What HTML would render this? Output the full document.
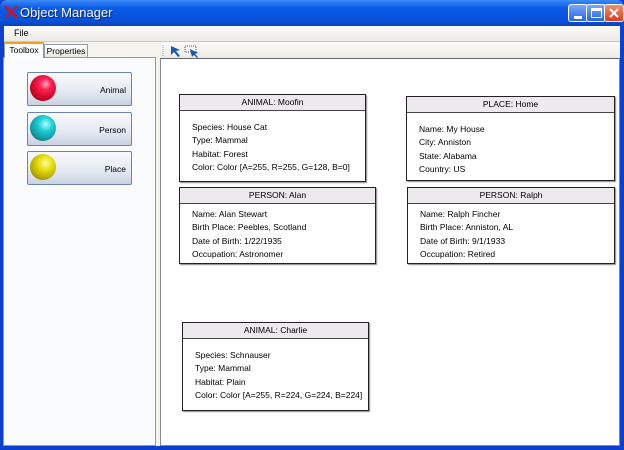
<!DOCTYPE html>
<html><head><style>
*{margin:0;padding:0;box-sizing:border-box}
body{width:624px;height:450px;overflow:hidden;font-family:"Liberation Sans",sans-serif;font-size:8.5px;color:#000;background:#0a3fd0;position:relative}
.title{position:absolute;left:0;top:0;width:624px;height:26px;background:linear-gradient(#3d8af7,#0a5ce8 30%,#0850d8 80%,#0742c0);border-radius:7px 7px 0 0}
.title span{position:absolute;left:20px;top:5px;color:#fff;font-size:13px;text-shadow:1px 1px #0a1f6a}
.win{position:absolute;left:4px;top:26px;width:616px;height:420px;background:#f4f3ee}
.menu{position:absolute;left:4px;top:26px;width:616px;height:16px;background:linear-gradient(#fafaf8,#ecebe6);border-bottom:1px solid #c8c8c0}
.menu span{position:absolute;left:10px;top:2px;font-size:9px}
.tb{position:absolute;width:20px;height:18px;top:4px;border:1px solid #fff;border-radius:3px;background:linear-gradient(#7aa8f8,#2a64e0)}
.box{position:absolute;background:#fff;border:1px solid #222;box-shadow:1px 1px 1px #888;white-space:nowrap}
.box .h{height:16px;background:#eceaec;border-bottom:1px solid #444;text-align:center;line-height:15px}
.box .b{padding:10px 0 0 12px;line-height:13.3px}
.btn{position:absolute;left:27px;width:105px;height:34px;border:1px solid #6b84b0;border-radius:2px;background:linear-gradient(#f8f9fb,#e4e9f2 60%,#c9d2e2)}
.btn span{position:absolute;right:5px;top:12px}
.ball{position:absolute;left:2px;top:2px;width:26px;height:26px;border-radius:50%}
</style></head><body>
<div class="title"><span>Object Manager</span>
<svg style="position:absolute;left:3px;top:4px" width="16" height="16"><path d="M2 2L14 14M14 2L2 14" stroke="#e01010" stroke-width="2.2"/></svg>
<div class="tb" style="left:568px"><div style="position:absolute;left:5px;top:11px;width:8px;height:3px;background:#fff"></div></div>
<div class="tb" style="left:586px"><div style="position:absolute;left:4px;top:3px;width:11px;height:10px;border:1px solid #fff;border-top-width:3px"></div></div>
<div class="tb" style="left:604px;background:linear-gradient(#f09070,#d84020)"><svg width="18" height="16"><path d="M5 4L13 12M13 4L5 12" stroke="#fff" stroke-width="2"/></svg></div>
</div>
<div class="win"></div>
<div class="menu"><span>File</span></div>
<div style="position:absolute;left:4px;top:42px;width:40px;height:16px;background:#fcfcfe;border:1px solid #919b9c;border-bottom:none;border-top:2px solid #f0a020;text-align:center;line-height:12px;z-index:2">Toolbox</div>
<div style="position:absolute;left:44px;top:44px;width:44px;height:14px;background:linear-gradient(#fff,#e8e8e0);border:1px solid #919b9c;text-align:center;line-height:12px">Properties</div>
<div style="position:absolute;left:3px;top:57px;width:153px;height:389px;background:#fafbfd;border:1px solid #919b9c"></div>
<div class="btn" style="top:72px"><div class="ball" style="background:radial-gradient(circle at 60% 35%,#ffb0c0 0,#ff2050 25%,#c00020 70%,#500010)"></div><span>Animal</span></div>
<div class="btn" style="top:112px"><div class="ball" style="background:radial-gradient(circle at 60% 35%,#b0ffff 0,#20d0d8 30%,#109098 70%,#104050)"></div><span>Person</span></div>
<div class="btn" style="top:151px"><div class="ball" style="background:radial-gradient(circle at 60% 35%,#ffffa0 0,#e8e010 30%,#b0a000 70%,#403a10)"></div><span>Place</span></div>
<div style="position:absolute;left:160px;top:42px;width:460px;height:16px;background:linear-gradient(#fbfbf9,#ecebe6)"></div>
<svg style="position:absolute;left:162px;top:43px" width="40" height="15"><path d="M1 2v11" stroke="#aaa" stroke-dasharray="1 1"/><path d="M9 3l9 4-4 1 4 5-2 1-4-5-3 3z" fill="#1a5cb0"/><rect x="23" y="3" width="11" height="6" fill="none" stroke="#555" stroke-dasharray="1 1"/><path d="M28 6l8 4-3 1 3 3-1 1-3-3-2 2z" fill="#1a5cb0"/></svg>
<div style="position:absolute;left:160px;top:58px;width:460px;height:388px;background:#fff;border:1px solid #888;border-top-color:#666"></div>
<div class="box" style="left:179px;top:94px;width:187px;height:88px"><div class="h">ANIMAL: Moofin</div><div class="b">Species: House Cat<br>Type: Mammal<br>Habitat: Forest<br>Color: Color [A=255, R=255, G=128, B=0]</div></div>
<div class="box" style="left:406px;top:96px;width:209px;height:85px"><div class="h">PLACE: Home</div><div class="b">Name: My House<br>City: Anniston<br>State: Alabama<br>Country: US</div></div>
<div class="box" style="left:179px;top:187px;width:197px;height:77px"><div class="h">PERSON: Alan</div><div class="b" style="padding-top:4px">Name: Alan Stewart<br>Birth Place: Peebles, Scotland<br>Date of Birth: 1/22/1935<br>Occupation: Astronomer</div></div>
<div class="box" style="left:407px;top:187px;width:208px;height:77px"><div class="h">PERSON: Ralph</div><div class="b" style="padding-top:4px">Name: Ralph Fincher<br>Birth Place: Anniston, AL<br>Date of Birth: 9/1/1933<br>Occupation: Retired</div></div>
<div class="box" style="left:182px;top:322px;width:187px;height:89px"><div class="h">ANIMAL: Charlie</div><div class="b">Species: Schnauser<br>Type: Mammal<br>Habitat: Plain<br>Color: Color [A=255, R=224, G=224, B=224]</div></div>
</body></html>
